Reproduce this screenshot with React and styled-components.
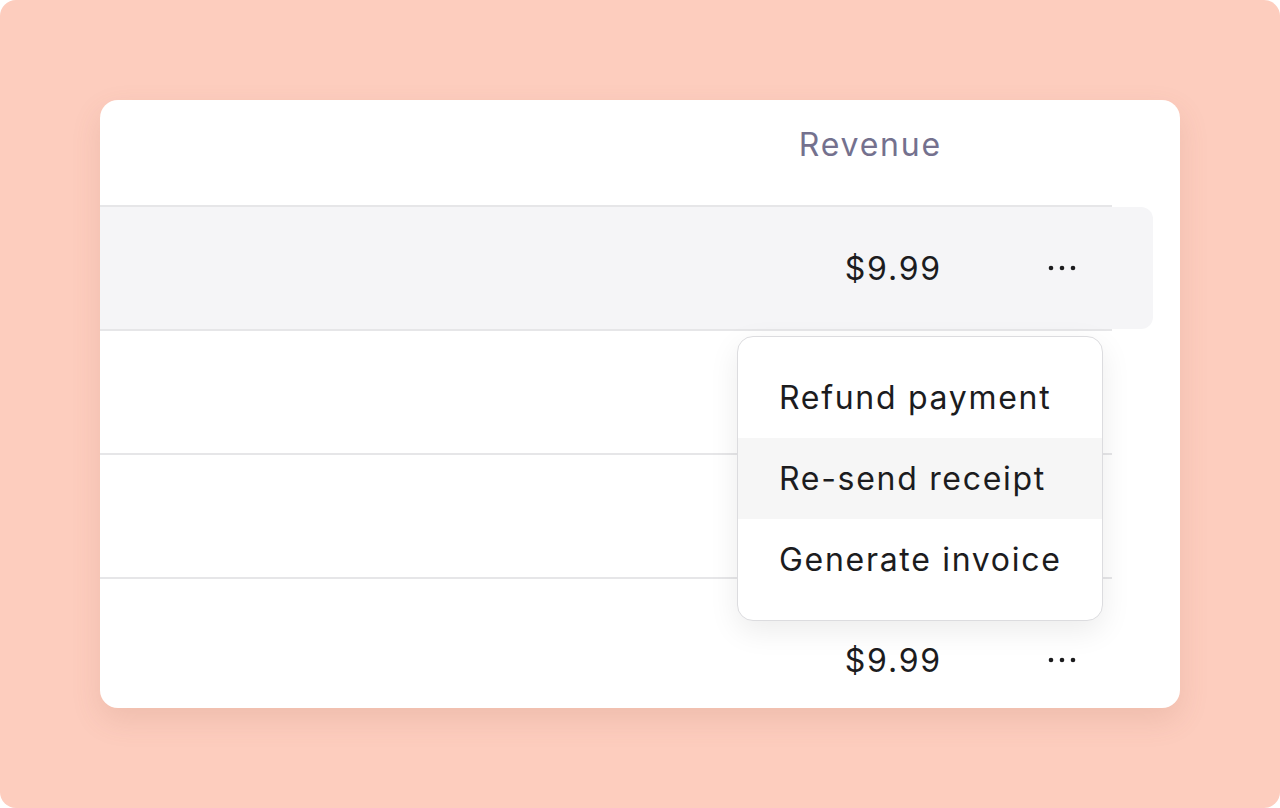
import React from "react";
import styled, { createGlobalStyle } from "styled-components";

const GlobalStyle = createGlobalStyle`
    html, body {
        margin: 0;
        padding: 0;
        background: #fff;
    }
    * {
        box-sizing: border-box;
    }
`;

const rows = [
    { id: 1, amount: "$9.99", active: true },
    { id: 2, amount: "" },
    { id: 3, amount: "" },
    { id: 4, amount: "$9.99", offset: 40 },
];

const menuItems = ["Refund payment", "Re-send receipt", "Generate invoice"];

const Dots = () => (
    <svg width="28" height="6" viewBox="0 0 28 6">
        <circle cx="3" cy="3" r="2.3" fill="#1c1c1e" />
        <circle cx="14" cy="3" r="2.3" fill="#1c1c1e" />
        <circle cx="25" cy="3" r="2.3" fill="#1c1c1e" />
    </svg>
);

const App = () => {
    return (
        <>
            <GlobalStyle />
            <Page>
                <Card>
                    <Header>
                        <HeadCell>Revenue</HeadCell>
                    </Header>
                    <Table>
                        {rows.map((row) => (
                            <Row key={row.id} $active={row.active} $offset={row.offset}>
                                <Amount>{row.amount}</Amount>
                                <Actions>{row.amount && <Dots />}</Actions>
                            </Row>
                        ))}
                    </Table>
                    <Menu>
                        {menuItems.map((item, i) => (
                            <MenuItem key={item} $hover={i === 1}>
                                {item}
                            </MenuItem>
                        ))}
                    </Menu>
                </Card>
            </Page>
        </>
    );
};

const Page = styled.div`
    width: 1280px;
    height: 808px;
    background: #fdcdbe;
    border-radius: 16px;
    padding: 100px;
    font-family: Inter, "Noto Sans", sans-serif;
`;

const Card = styled.div`
    position: relative;
    width: 1080px;
    height: 608px;
    background: #fff;
    border-radius: 18px;
    overflow: hidden;
    box-shadow: 0 12px 30px rgba(150, 90, 70, 0.14);
`;

const Header = styled.div`
    display: flex;
    justify-content: flex-end;
    align-items: center;
    width: 842px;
    height: 105px;
    padding-bottom: 16px;
`;

const HeadCell = styled.div`
    font-size: 32px;
    color: #74718e;
    letter-spacing: 1.8px;
`;

const Table = styled.div`
    width: 1012px;
`;

const Row = styled.div`
    position: relative;
    z-index: 0;
    display: flex;
    align-items: center;
    height: 124px;
    border-top: 2px solid #e6e6e8;
    padding-top: ${(p) => (p.$offset ? `${p.$offset}px` : "0")};

    &::before {
        content: "";
        display: ${(p) => (p.$active ? "block" : "none")};
        position: absolute;
        top: 0;
        bottom: 0;
        left: -20px;
        right: -41px;
        background: #f5f5f7;
        border-radius: 12px;
        z-index: -1;
    }
`;

const Amount = styled.div`
    width: 842px;
    text-align: right;
    font-size: 32px;
    color: #1c1c1e;
    letter-spacing: 1.8px;
`;

const Actions = styled.div`
    display: flex;
    align-items: center;
    padding-left: 106px;
`;

const Menu = styled.div`
    position: absolute;
    left: 637px;
    top: 236px;
    width: 366px;
    padding: 20px 0;
    background: #fff;
    border: 1.5px solid #dcdcdf;
    border-radius: 16px;
    box-shadow: 0 10px 30px rgba(0, 0, 0, 0.08);
    overflow: hidden;
`;

const MenuItem = styled.div`
    display: flex;
    align-items: center;
    height: 81px;
    padding-left: 41px;
    font-size: 32px;
    color: #1c1c1e;
    letter-spacing: 1.7px;
    white-space: nowrap;
    background: ${(p) => (p.$hover ? "#f6f6f6" : "transparent")};
`;

export default App;
